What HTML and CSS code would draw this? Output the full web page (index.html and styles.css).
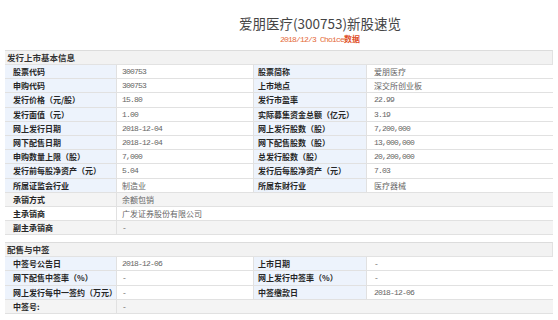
FILE: index.html
```html
<!DOCTYPE html>
<html lang="zh-CN">
<head>
<meta charset="utf-8">
<title>爱朋医疗(300753)新股速览</title>
<link rel="stylesheet" href="styles.css">
</head>
<body>
<div class="page">
  <header class="hd">
    <h1 class="title">爱朋医疗(300753)新股速览</h1>
    <p class="sub"><span class="mono">2018/12/3 Choice</span><b>数据</b></p>
  </header>

  <section class="sec">
    <div class="sec-title">发行上市基本信息</div>
    <div class="grid">
      <div class="row"><div class="lb">股票代码</div><div class="val mono">300753</div><div class="lb">股票简称</div><div class="val">爱朋医疗</div></div>
      <div class="row"><div class="lb">申购代码</div><div class="val mono">300753</div><div class="lb">上市地点</div><div class="val">深交所创业板</div></div>
      <div class="row"><div class="lb">发行价格（元/股）</div><div class="val mono">15.80</div><div class="lb">发行市盈率</div><div class="val mono">22.99</div></div>
      <div class="row"><div class="lb">发行面值（元）</div><div class="val mono">1.00</div><div class="lb">实际募集资金总额（亿元）</div><div class="val mono">3.19</div></div>
      <div class="row"><div class="lb">网上发行日期</div><div class="val mono">2018-12-04</div><div class="lb">网上发行股数（股）</div><div class="val mono">7,200,000</div></div>
      <div class="row"><div class="lb">网下配售日期</div><div class="val mono">2018-12-04</div><div class="lb">网下配售股数（股）</div><div class="val mono">13,000,000</div></div>
      <div class="row"><div class="lb">申购数量上限（股）</div><div class="val mono">7,000</div><div class="lb">总发行股数（股）</div><div class="val mono">20,200,000</div></div>
      <div class="row"><div class="lb">发行前每股净资产（元）</div><div class="val mono">5.04</div><div class="lb">发行后每股净资产（元）</div><div class="val mono">7.03</div></div>
      <div class="row"><div class="lb">所属证监会行业</div><div class="val">制造业</div><div class="lb">所属东财行业</div><div class="val">医疗器械</div></div>
      <div class="row wide alt"><div class="lb">承销方式</div><div class="val">余额包销</div></div>
      <div class="row wide"><div class="lb">主承销商</div><div class="val">广发证券股份有限公司</div></div>
      <div class="row wide alt"><div class="lb">副主承销商</div><div class="val mono">-</div></div>
    </div>
  </section>

  <section class="sec sec2">
    <div class="sec-title">配售与中签</div>
    <div class="grid">
      <div class="row"><div class="lb">中签号公告日</div><div class="val mono">2018-12-06</div><div class="lb">上市日期</div><div class="val mono">-</div></div>
      <div class="row"><div class="lb">网下配售中签率（%）</div><div class="val mono">-</div><div class="lb">网上发行中签率（%）</div><div class="val mono">-</div></div>
      <div class="row"><div class="lb">网上发行每中一签约（万元）</div><div class="val mono">-</div><div class="lb">中签缴款日</div><div class="val mono">2018-12-06</div></div>
      <div class="row wide alt"><div class="lb">中签号:</div><div class="val mono">-</div></div>
    </div>
  </section>
</div>
</body>
</html>
```
FILE: styles.css
```css
* { box-sizing: border-box; }
html, body { margin: 0; padding: 0; background: #fff; }
body {
  font-family: "Noto Sans CJK SC", "Noto Sans", sans-serif;
  color: #333;
  width: 558px;
  height: 320px;
  overflow: hidden;
}
.page { padding: 0 5px 0 5px; }

.hd {
  display: flex;
  flex-direction: column;
  align-items: center;
  padding: 15px 0 0 82px;
  height: 50px;
}
.title {
  margin: 0;
  font-size: 13.5px;
  line-height: 17px;
  font-weight: 400;
  color: #444;
}
.sub {
  margin: 1px 0 0;
  font-size: 8px;
  line-height: 11px;
  color: #e46a3a;
}
.sub b { font-weight: 700; color: #e0502a; }

.mono {
  font-family: "Liberation Mono", "Noto Sans CJK SC", monospace;
  letter-spacing: -0.8px;
}

.sec { width: 548px; }
.sec2 { margin-top: 7px; }
.sec-title {
  height: 15px;
  background: #f2f2f2;
  border-top: 1px solid #dcdcdc;
  border-bottom: 1px solid #e2e2e2;
  border-right: 1px solid #e2e2e2;
  font-size: 8.5px;
  font-weight: 700;
  line-height: 13px;
  padding-left: 2px;
  color: #333;
}
.grid { display: flex; flex-direction: column; }
.row {
  display: grid;
  grid-template-columns: 111px 137px 113px 187px;
  height: 14.2px;
  border-bottom: 1px solid #e1e1e1;
  border-right: 1px solid #e2e2e2;
}
.row.wide { grid-template-columns: 111px 437px; }
.lb {
  background: #edf3fc;
  font-size: 8px;
  font-weight: 700;
  color: #262626;
  line-height: 13px;
  padding-left: 8px;
  white-space: nowrap;
  overflow: hidden;
}
.row .lb:nth-child(3) { padding-left: 4px; border-left: 1px solid #e1e1e1; }
.val {
  background: #fff;
  font-size: 8px;
  color: #666;
  line-height: 13px;
  padding-left: 5px;
  border-left: 1px solid #e1e1e1;
  white-space: nowrap;
}
.row .val:nth-child(4) { padding-left: 7px; }
.row.wide .lb, .row.wide .val { background: #fff; }
.row.wide.alt .lb, .row.wide.alt .val { background: #f4f4f4; }
```
